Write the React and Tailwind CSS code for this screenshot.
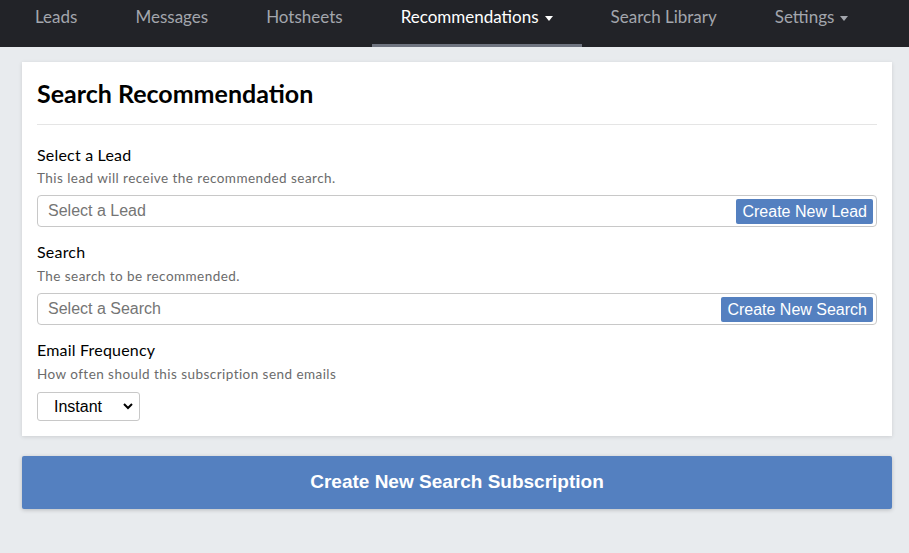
import React from "react";

const navItems = [
  { label: "Leads" },
  { label: "Messages" },
  { label: "Hotsheets" },
  { label: "Recommendations", caret: true, active: true },
  { label: "Search Library" },
  { label: "Settings", caret: true },
];

const Caret = () => (
  <svg width="8" height="5" viewBox="0 0 8 5" className="ml-[6px] mt-[2px] fill-current">
    <path d="M0 0h8L4 5z" />
  </svg>
);

const Field = ({ label, help, children, first, select }) => (
  <div className={first ? "" : "mt-[15px]"}>
    <div className="text-[16px] leading-[20px] text-black tracking-[0.2px]">{label}</div>
    <div className={"text-[13.5px] leading-[18px] text-[#6b6b6b] tracking-[0.45px] " + (first ? "mt-[4px]" : "mt-[5px]")}>{help}</div>
    <div className={select ? "mt-[9px]" : "mt-[8px]"}>{children}</div>
  </div>
);

const InputWithButton = ({ placeholder, button }) => (
  <div className="flex items-center h-[32px] border border-[#c8c8c8] rounded-[4px] bg-white pl-[10px] pr-[3px]" style={{ fontFamily: '"Liberation Sans", Arial, sans-serif' }}>
    <span className="flex-1 text-[16px] text-[#757575]">{placeholder}</span>
    <button className="h-[25px] px-[6px] bg-[#5480c0] text-white text-[16px] leading-[25px] rounded-[2px]">{button}</button>
  </div>
);

export default function App() {
  return (
    <div className="min-h-[553px] bg-[#e8ebee]" style={{ fontFamily: 'Lato, "Noto Sans", sans-serif' }}>
      <nav className="h-[47px] bg-[#222328] flex pl-[6px]">
        {navItems.map((item) => (
          <div
            key={item.label}
            className={
              "flex items-start pt-[7px] px-[29px] text-[17px] leading-[20px] border-b-[3px] " +
              (item.active ? "text-white border-[#6f7480]" : "text-[#a3a6ad] border-transparent")
            }
          >
            {item.label}
            {item.caret && <span className="h-[20px] flex items-center"><Caret /></span>}
          </div>
        ))}
      </nav>

      <div className="pl-[22px] pr-[17px] pt-[15px]">
        <div className="bg-white shadow-[0_1px_4px_rgba(0,0,0,0.12)] px-[15px] pt-[16px] pb-[15px]">
          <h1 className="text-[25px] font-bold leading-[30px] text-black">Search Recommendation</h1>
          <div className="border-t border-[#e5e5e5] mt-[16px] mb-[20px]" />

          <Field first label="Select a Lead" help="This lead will receive the recommended search.">
            <InputWithButton placeholder="Select a Lead" button="Create New Lead" />
          </Field>
          <Field label="Search" help="The search to be recommended.">
            <InputWithButton placeholder="Select a Search" button="Create New Search" />
          </Field>
          <Field select label="Email Frequency" help="How often should this subscription send emails">
            <div
              className="w-[103px] h-[29px] border border-[#c8c8c8] rounded-[3px] flex items-center justify-between pl-[16px] pr-[6px] text-[16px] text-black"
              style={{ fontFamily: '"Liberation Sans", Arial, sans-serif' }}
            >
              <span>Instant</span>
              <svg width="10" height="7" viewBox="0 0 10 7" fill="none" stroke="black" strokeWidth="2">
                <path d="M1 1l4 4 4-4" />
              </svg>
            </div>
          </Field>
        </div>

        <button
          className="mt-[20px] w-full h-[53px] bg-[#5480c0] text-white text-[19px] font-bold rounded-[2px] shadow-[0_1px_4px_rgba(0,0,0,0.2)]"
          style={{ fontFamily: '"Liberation Sans", Arial, sans-serif' }}
        >
          Create New Search Subscription
        </button>
      </div>
    </div>
  );
}
